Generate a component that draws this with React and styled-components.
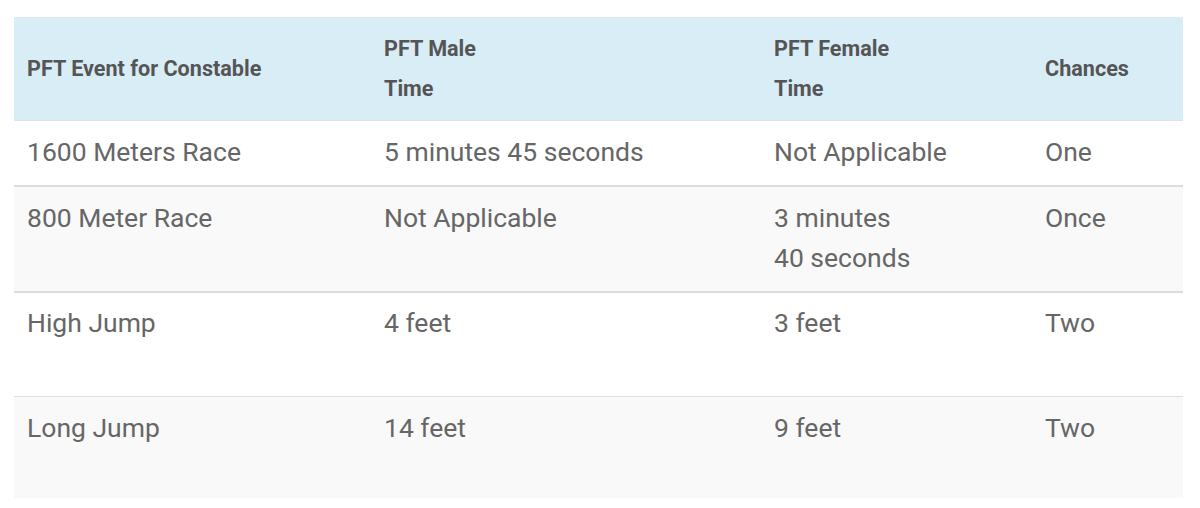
import React from "react";
import styled, { createGlobalStyle } from "styled-components";

const Global = createGlobalStyle`
  html, body { margin: 0; padding: 0; background: #fff; }
  body { font-family: Roboto, "Liberation Sans", Arial, sans-serif; }
`;

const Page = styled.div`
  padding: 17px 17px 0 14px;
`;

const Table = styled.table`
  width: 1169px;
  border-collapse: collapse;
  border-spacing: 0;
  font-family: Roboto, "Liberation Sans", Arial, sans-serif;
`;

const Head = styled.thead`
  background: #d9edf7;
`;

const HeadCell = styled.th`
  text-align: left;
  vertical-align: middle;
  font-size: 21.6px;
  font-weight: 700;
  line-height: 40px;
  color: #555;
  padding: 12px 13px 11px;
  border-bottom: 1px solid #dde3e6;
  width: ${(p) => p.$w}px;
  box-sizing: border-box;
  white-space: nowrap;
`;

const Row = styled.tr`
  background: ${(p) => (p.$striped ? "#f9f9f9" : "#fff")};
  border-bottom: ${(p) => p.$border};
`;

const Cell = styled.td`
  vertical-align: top;
  font-size: 26.5px;
  font-weight: 400;
  line-height: 40px;
  color: #666;
  padding: ${(p) => p.$pt}px 13px ${(p) => 24 - p.$pt}px;
  height: ${(p) => p.$h}px;
  box-sizing: border-box;
  white-space: nowrap;
`;

const widths = [357, 390, 271, 151];

const rows = [
  { cells: ["1600 Meters Race", "5 minutes 45 seconds", "Not Applicable", "One"], h: 64, pt: 11, border: "2px solid #dcdcdc" },
  { cells: ["800 Meter Race", "Not Applicable", ["3 minutes", "40 seconds"], "Once"], h: 104, pt: 11, border: "2px solid #dcdcdc", striped: true },
  { cells: ["High Jump", "4 feet", "3 feet", "Two"], h: 104, pt: 10, border: "1px solid #dedede" },
  { cells: ["Long Jump", "14 feet", "9 feet", "Two"], h: 102, pt: 11, border: "none", striped: true },
];

const renderContent = (c) =>
  Array.isArray(c)
    ? c.map((line, i) => (
        <React.Fragment key={i}>
          {i > 0 && <br />}
          {line}
        </React.Fragment>
      ))
    : c;

export default function App() {
  return (
    <>
      <Global />
      <Page>
        <Table>
          <Head>
            <tr>
              <HeadCell $w={widths[0]}>PFT Event for Constable</HeadCell>
              <HeadCell $w={widths[1]}>
                PFT Male
                <br />
                Time
              </HeadCell>
              <HeadCell $w={widths[2]}>
                PFT Female
                <br />
                Time
              </HeadCell>
              <HeadCell $w={widths[3]}>Chances</HeadCell>
            </tr>
          </Head>
          <tbody>
            {rows.map((r, i) => (
              <Row key={i} $striped={r.striped} $border={r.border}>
                {r.cells.map((c, j) => (
                  <Cell key={j} $h={r.h} $pt={r.pt}>
                    {renderContent(c)}
                  </Cell>
                ))}
              </Row>
            ))}
          </tbody>
        </Table>
      </Page>
    </>
  );
}
